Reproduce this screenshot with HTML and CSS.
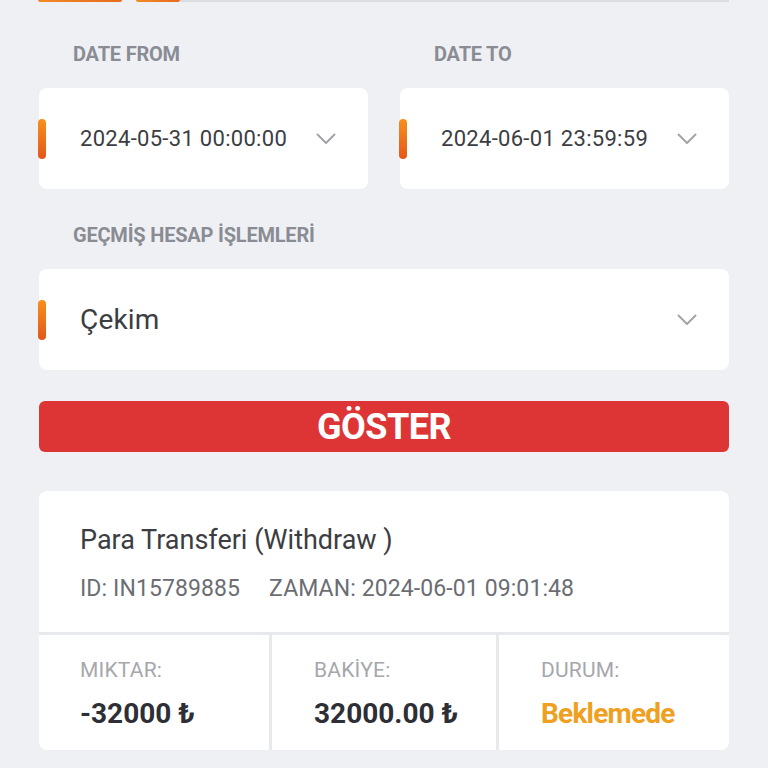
FILE: index.html
```html
<!DOCTYPE html>
<html lang="tr">
<head>
    <meta charset="UTF-8">
    <meta name="viewport" content="width=device-width, initial-scale=1.0">
    <title>Hesap Geçmişi</title>
    <link rel="stylesheet" href="styles.css">
</head>
<body>

    <!-- Tabs (scrolled off) -->
    <div class="tabs">
        <span class="tab tab-wide"></span>
        <span class="tab tab-small"></span>
        <span class="tab-line"></span>
    </div>

    <!-- Date filters -->
    <div class="date-row">
        <div class="field">
            <div class="label">DATE FROM</div>
            <div class="select-box">
                <span class="marker"></span>
                <span class="select-text">2024-05-31 00:00:00</span>
                <svg class="chevron" width="20" height="12" viewBox="0 0 20 12"><path d="M1.5 1.5 L10 10 L18.5 1.5" fill="none" stroke="#a3a4a9" stroke-width="2" stroke-linecap="round" stroke-linejoin="round"/></svg>
            </div>
        </div>
        <div class="field">
            <div class="label">DATE TO</div>
            <div class="select-box">
                <span class="marker"></span>
                <span class="select-text">2024-06-01 23:59:59</span>
                <svg class="chevron" width="20" height="12" viewBox="0 0 20 12"><path d="M1.5 1.5 L10 10 L18.5 1.5" fill="none" stroke="#a3a4a9" stroke-width="2" stroke-linecap="round" stroke-linejoin="round"/></svg>
            </div>
        </div>
    </div>

    <!-- Transaction type -->
    <div class="field type-field">
        <div class="label">GEÇMİŞ HESAP İŞLEMLERİ</div>
        <div class="select-box">
            <span class="marker"></span>
            <span class="select-text big">Çekim</span>
            <svg class="chevron" width="20" height="12" viewBox="0 0 20 12"><path d="M1.5 1.5 L10 10 L18.5 1.5" fill="none" stroke="#a3a4a9" stroke-width="2" stroke-linecap="round" stroke-linejoin="round"/></svg>
        </div>
    </div>

    <button class="show-btn">GÖSTER</button>

    <!-- Result card -->
    <div class="tx-card">
        <div class="tx-head">
            <div class="tx-title">Para Transferi (Withdraw )</div>
            <div class="tx-meta"><span>ID: IN15789885</span><span>ZAMAN: 2024-06-01 09:01:48</span></div>
        </div>
        <div class="tx-stats">
            <div class="stat">
                <div class="stat-label">MIKTAR:</div>
                <div class="stat-value">-32000 ₺</div>
            </div>
            <div class="stat">
                <div class="stat-label">BAKİYE:</div>
                <div class="stat-value">32000.00 ₺</div>
            </div>
            <div class="stat">
                <div class="stat-label">DURUM:</div>
                <div class="stat-value pending">Beklemede</div>
            </div>
        </div>
    </div>

</body>
</html>
```

FILE: styles.css
```css
body {
    margin: 0;
    padding: 0 39px;
    background-color: #eff0f4;
    font-family: Roboto, "Liberation Sans", sans-serif;
    color: #3c3d42;
    overflow: hidden;
}

/* Tabs strip at the top */
.tabs {
    display: flex;
    align-items: flex-start;
    height: 3px;
    margin-left: -1px;
}

.tab {
    height: 2px;
    background: linear-gradient(to right, #f08a24, #e86a1e);
    border-radius: 0 0 3px 3px;
}

.tab-wide {
    width: 84px;
}

.tab-small {
    width: 44px;
    margin-left: 14px;
}

.tab-line {
    flex: 1;
    height: 2px;
    background-color: #dcdde2;
}

/* Filter fields */
.date-row {
    display: flex;
    gap: 32px;
    margin-top: 38px;
}

.field {
    flex: 1;
}

.label {
    font-size: 20px;
    font-weight: bold;
    color: #8a8c94;
    padding-left: 34px;
    letter-spacing: -0.2px;
    line-height: 26px;
}

.select-box {
    position: relative;
    display: flex;
    align-items: center;
    height: 101px;
    margin-top: 21px;
    padding: 0 32px 0 41px;
    background-color: white;
    border-radius: 8px;
}

.marker {
    position: absolute;
    left: -1px;
    top: 31px;
    width: 8px;
    height: 40px;
    border-radius: 4px;
    background: linear-gradient(to bottom, #f7901c, #e4561a);
}

.select-text {
    flex: 1;
    font-size: 22px;
    color: #3c3d42;
    letter-spacing: 0.3px;
}

.select-text.big {
    font-size: 28px;
    letter-spacing: 0.2px;
}

.chevron {
    display: block;
}

.type-field {
    margin-top: 33px;
}

.type-field .select-box {
    margin-top: 21px;
}

/* Show button */
.show-btn {
    display: block;
    width: 100%;
    height: 51px;
    margin-top: 31px;
    border: none;
    border-radius: 6px;
    background-color: #dd3535;
    color: white;
    font-family: Roboto, "Liberation Sans", sans-serif;
    font-size: 36px;
    font-weight: bold;
    letter-spacing: -0.5px;
    padding: 0;
}

/* Transaction card */
.tx-card {
    margin-top: 39px;
    background-color: #e8e9ed;
    border-radius: 8px;
    overflow: hidden;
}

.tx-head {
    background-color: white;
    padding: 32px 41px 0;
    height: 141px;
    box-sizing: border-box;
}

.tx-title {
    font-size: 27px;
    color: #3c3d42;
    line-height: 34px;
}

.tx-meta {
    display: flex;
    gap: 29px;
    margin-top: 18px;
    font-size: 23px;
    line-height: 28px;
    color: #6b6d73;
    letter-spacing: 0.1px;
}

.tx-stats {
    display: grid;
    grid-template-columns: 230px 1fr 230px;
    gap: 3px;
    margin-top: 3px;
}

.stat {
    background-color: white;
    height: 115px;
    padding: 22px 0 0 42px;
    box-sizing: border-box;
}

.stat:first-child {
    padding-left: 41px;
}

.stat-label {
    font-size: 21px;
    line-height: 26px;
    color: #a6a7ac;
    letter-spacing: 0.2px;
}

.stat-value {
    margin-top: 15px;
    font-size: 28px;
    line-height: 32px;
    font-weight: bold;
    color: #2e2f36;
}

.stat-value.pending {
    color: #f0a020;
    letter-spacing: -0.8px;
}
```
